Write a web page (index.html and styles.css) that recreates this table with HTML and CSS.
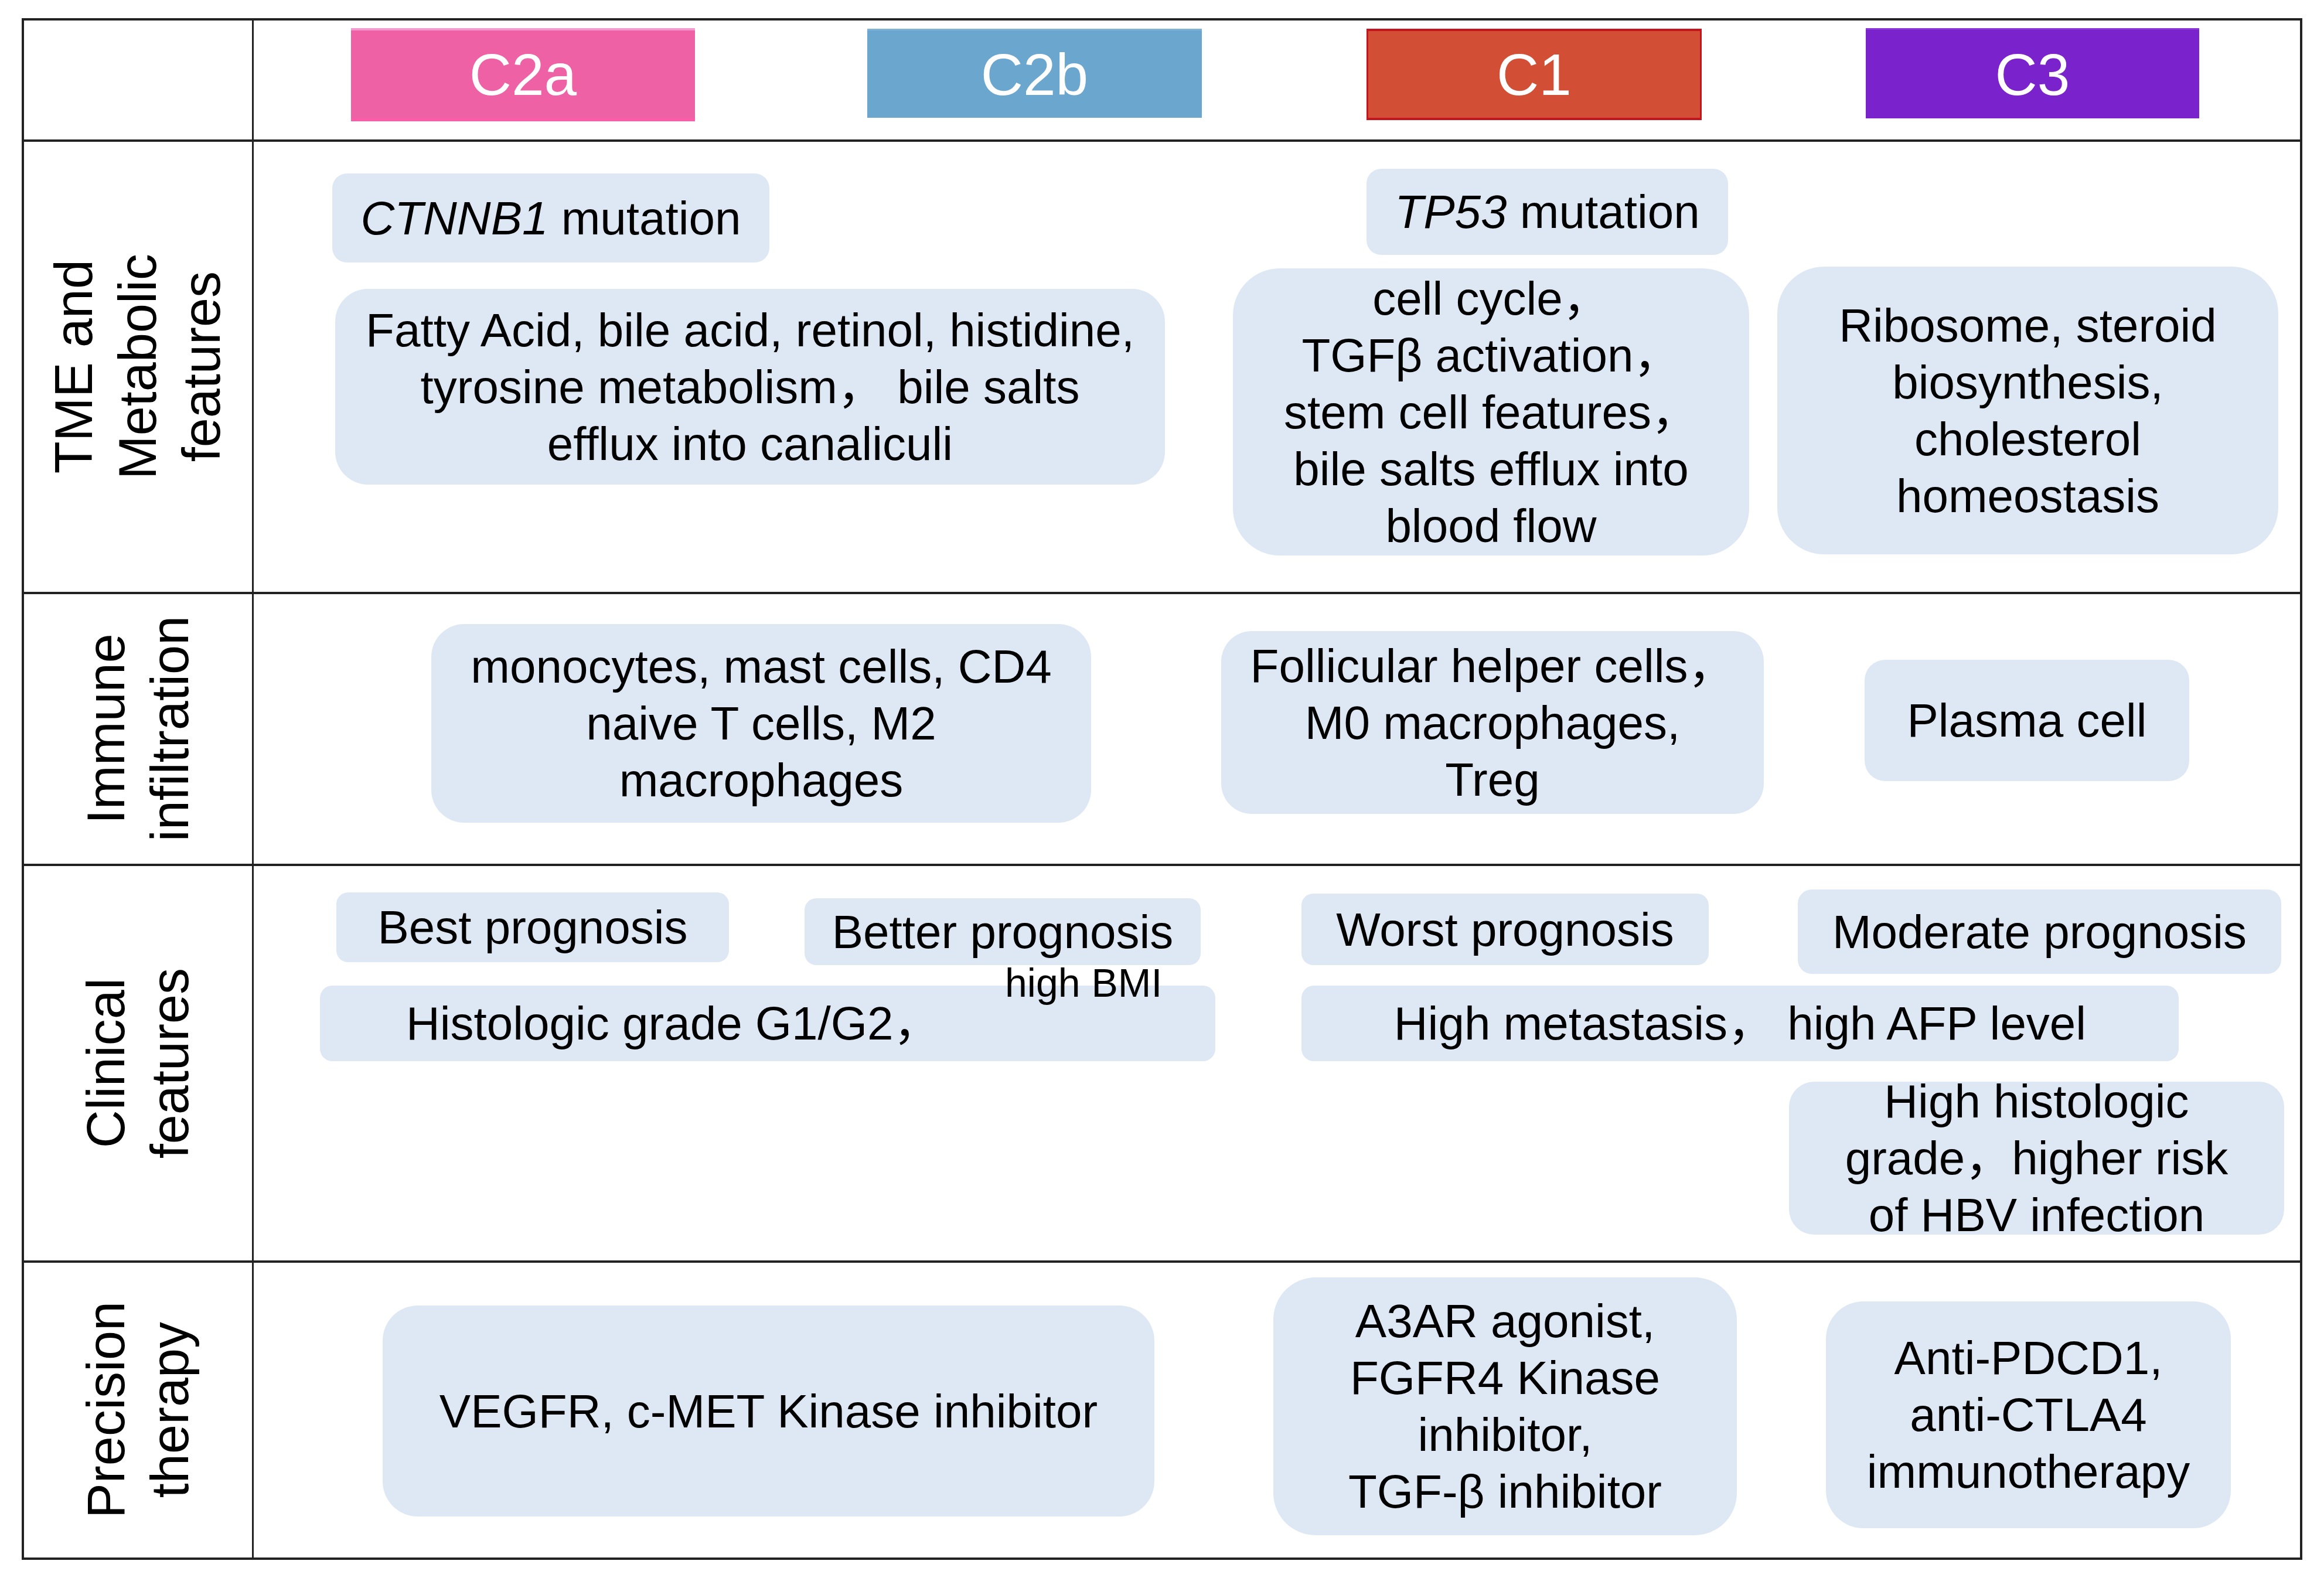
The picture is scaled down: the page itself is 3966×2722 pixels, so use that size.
FILE: index.html
```html
<!DOCTYPE html>
<html lang="en">
<head>
  <meta charset="UTF-8">
  <title>HCC subtype features</title>
  <link rel="stylesheet" href="styles.css">
</head>
<body>
  <div class="summary">
    <!-- header: subtype tags -->
    <div class="label-cell"></div>
    <div class="content head-row">
      <div class="tag tag-c2a">C2a</div>
      <div class="tag tag-c2b">C2b</div>
      <div class="tag tag-c1">C1</div>
      <div class="tag tag-c3">C3</div>
    </div>

    <!-- TME and metabolic -->
    <div class="label-cell row-line">
      <span class="label-text">TME and<br>Metabolic<br>features</span>
    </div>
    <div class="content row-line">
      <div class="stack st-tme-a">
        <div class="pill p-ctnnb1"><span><i>CTNNB1</i> mutation</span></div>
        <div class="pill p-fatty"><span>Fatty Acid, bile acid, retinol, histidine,<br>tyrosine metabolism， bile salts<br>efflux into canaliculi</span></div>
      </div>
      <div class="stack st-tme-b">
        <div class="pill p-tp53"><span><i>TP53</i> mutation</span></div>
        <div class="pill p-cycle"><span>cell cycle，<br>TGFβ activation，<br>stem cell features，<br>bile salts efflux into<br>blood flow</span></div>
      </div>
      <div class="pill p-ribo"><span>Ribosome, steroid<br>biosynthesis,<br>cholesterol<br>homeostasis</span></div>
    </div>

    <!-- immune infiltration -->
    <div class="label-cell row-line">
      <span class="label-text">Immune<br>infiltration</span>
    </div>
    <div class="content row-line">
      <div class="pill p-mono"><span>monocytes, mast cells, CD4<br>naive T cells, M2<br>macrophages</span></div>
      <div class="pill p-foll"><span>Follicular helper cells，<br>M0 macrophages,<br>Treg</span></div>
      <div class="pill p-plasma"><span>Plasma cell</span></div>
    </div>

    <!-- clinical -->
    <div class="label-cell row-line">
      <span class="label-text">Clinical<br>features</span>
    </div>
    <div class="content row-line">
      <div class="stack st-clin-a">
        <div class="pair">
          <div class="pill p-best"><span>Best prognosis</span></div>
          <div class="pill p-better"><span>Better prognosis</span></div>
        </div>
        <div class="pill p-histo">
          <span>Histologic grade G1/G2，</span>
          <span class="stray">high BMI</span>
        </div>
      </div>
      <div class="stack st-clin-b">
        <div class="pair">
          <div class="pill p-worst"><span>Worst prognosis</span></div>
          <div class="pill p-moderate"><span>Moderate prognosis</span></div>
        </div>
        <div class="pill p-meta"><span>High metastasis， high AFP level</span></div>
        <div class="pill p-highgrade"><span>High histologic<br>grade，higher risk<br>of HBV infection</span></div>
      </div>
    </div>

    <!-- precision therapy -->
    <div class="label-cell row-line last">
      <span class="label-text">Precision<br>therapy</span>
    </div>
    <div class="content row-line">
      <div class="pill p-vegfr"><span>VEGFR, c-MET Kinase inhibitor</span></div>
      <div class="pill p-a3ar"><span>A3AR agonist,<br>FGFR4 Kinase<br>inhibitor,<br>TGF-β inhibitor</span></div>
      <div class="pill p-anti"><span>Anti-PDCD1,<br>anti-CTLA4<br>immunotherapy</span></div>
    </div>
  </div>
</body>
</html>
```

FILE: styles.css
```css
* {
  margin: 0;
  padding: 0;
  box-sizing: border-box;
}

body {
  background: #fff;
  color: #000;
  font-family: "Liberation Sans", Arial, "Noto Sans CJK SC", sans-serif;
}

.summary {
  display: grid;
  grid-template-columns: 392px 3492px;
  grid-template-rows: 203px 772px 464px 677px 507px;
  width: 3892px;
  margin: 31px 0 0 37px;
  border: 4px solid #222;
}

.label-cell {
  position: relative;
  border-right: 3px solid #222;
  display: flex;
  align-items: center;
  justify-content: center;
}

.row-line {
  border-top: 4px solid #222;
}

/* the two verticals run a little past the bottom rule */
.label-cell.last::before,
.label-cell.last::after {
  content: "";
  position: absolute;
  bottom: -16px;
  width: 4px;
  height: 12px;
  background: #222;
}

.label-cell.last::before { left: -4px; }
.label-cell.last::after { right: -3px; width: 3px; }

.label-text {
  writing-mode: vertical-rl;
  transform: rotate(180deg);
  font-size: 90px;
  line-height: 109px;
  text-align: center;
  white-space: nowrap;
}

.content {
  display: flex;
  align-items: flex-start;
}

/* subtype tags */
.head-row {
  padding-top: 13px;
}

.tag {
  display: flex;
  align-items: center;
  justify-content: center;
  color: #fff;
  font-size: 100px;
  line-height: 1;
}

.tag-c2a {
  margin-left: 166px;
  width: 587px;
  height: 159px;
  background: #ee61a4;
  border-top: 4px solid #f59ad0;
  border-bottom: 5px solid #ff5aa8;
}

.tag-c2b {
  margin-left: 294px;
  margin-top: 1px;
  width: 571px;
  height: 152px;
  background: #6ba6cf;
  border-top: 3px solid #7eb2d6;
}

.tag-c1 {
  margin-left: 281px;
  margin-top: 1px;
  width: 572px;
  height: 156px;
  background: #d24f36;
  border: 4px solid #c4141e;
  border-left-width: 3px;
  border-right-width: 3px;
}

.tag-c3 {
  margin-left: 280px;
  width: 569px;
  height: 154px;
  background: #7a22cc;
  border-top: 3px solid #8a35d6;
}

/* feature pills */
.stack {
  display: flex;
  flex-direction: column;
  align-items: flex-start;
}

.pair {
  display: flex;
  align-items: flex-start;
}

.pill {
  position: relative;
  display: flex;
  align-items: center;
  justify-content: center;
  flex-shrink: 0;
  background: #dee8f4;
  font-size: 80px;
  line-height: 97px;
  text-align: center;
  white-space: nowrap;
}

.p-ctnnb1 { margin-top: 54px; width: 746px; height: 152px; border-radius: 25px; }
.p-fatty { margin: 45px 0 0 5px; width: 1416px; height: 334px; border-radius: 56px; }
.p-tp53 { margin: 46px 0 0 228px; width: 617px; height: 147px; border-radius: 25px; }
.p-cycle { margin-top: 23px; width: 881px; height: 490px; border-radius: 80px; }
.p-ribo { margin: 213px 0 0 48px; width: 855px; height: 491px; border-radius: 80px; }

.st-tme-a { margin-left: 134px; }
.st-tme-b { margin-left: 116px; }

.p-mono { margin: 51px 0 0 303px; width: 1126px; height: 339px; border-radius: 56px; }
.p-foll { margin: 63px 0 0 222px; width: 926px; height: 312px; border-radius: 52px; }
.p-plasma { margin: 112px 0 0 172px; width: 554px; height: 207px; border-radius: 35px; }

.st-clin-a { margin-left: 113px; }
.st-clin-b { margin-left: 147px; }

.p-best { margin: 45px 0 0 28px; width: 670px; height: 119px; border-radius: 20px; }
.p-better { margin: 55px 0 0 129px; width: 676px; height: 114px; border-radius: 20px; }
.p-histo {
  margin-top: 35px;
  width: 1528px;
  height: 129px;
  border-radius: 21px;
  justify-content: flex-start;
  padding-left: 147px;
}
.p-worst { margin-top: 47px; width: 695px; height: 122px; border-radius: 20px; }
.p-moderate { margin: 40px 0 0 152px; width: 825px; height: 144px; border-radius: 24px; }
.p-meta { margin-top: 20px; width: 1497px; height: 129px; border-radius: 21px; }
.p-highgrade { margin: 35px 0 0 832px; width: 845px; height: 261px; border-radius: 43px; }

/* leftover label that sits over the pill edge */
.stray {
  position: absolute;
  left: 1169px;
  top: -39px;
  font-size: 68px;
  line-height: 68px;
}

.p-vegfr { margin: 73px 0 0 220px; width: 1317px; height: 360px; border-radius: 60px; }
.p-a3ar { margin: 25px 0 0 203px; width: 791px; height: 440px; border-radius: 72px; }
.p-anti { margin: 66px 0 0 152px; width: 691px; height: 387px; border-radius: 64px; }
```
